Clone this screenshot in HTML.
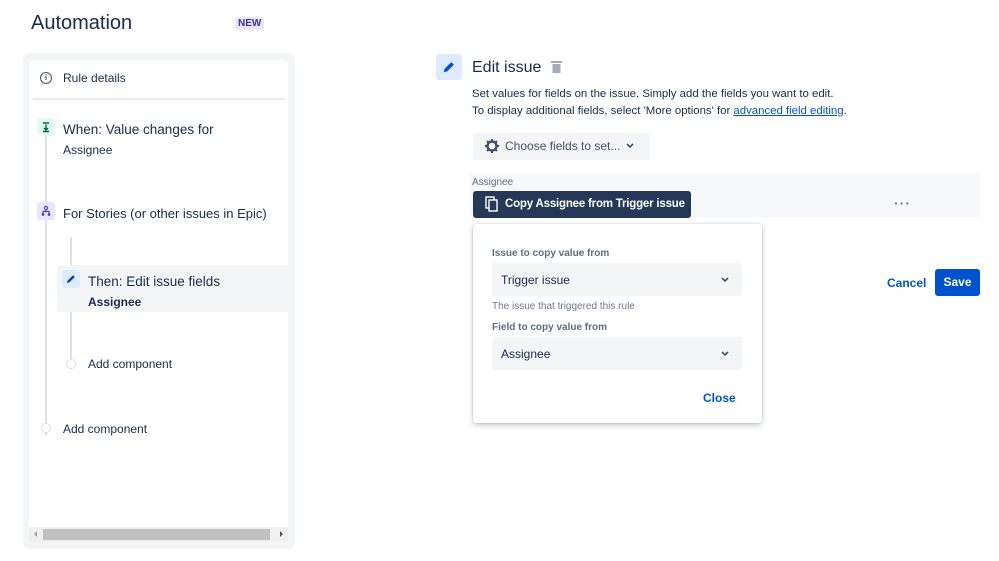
<!DOCTYPE html>
<html><head><style>
*{box-sizing:border-box;margin:0;padding:0}
body{width:999px;height:561px;background:#fff;font-family:"Liberation Sans",sans-serif;color:#172b4d;position:relative;overflow:hidden}
.a{position:absolute}
.t{font-size:13px;white-space:nowrap}
</style></head><body>
<div class="a" style="left:31px;top:12px;font-size:20px;color:#172b4d">Automation</div>
<div class="a" style="left:235px;top:17px;background:#eae6ff;color:#403294;font-size:10px;font-weight:bold;padding:1px 3px;border-radius:3px">NEW</div>

<div class="a" style="left:23px;top:53px;width:272px;height:496px;background:#f4f5f7;border-radius:6px"></div>
<div class="a" style="left:29px;top:60px;width:259px;height:467px;background:#fff;border-radius:6px 6px 0 0"></div>
<div class="a" style="left:29px;top:527px;width:259px;height:15px;background:#f0f0f0"></div>
<div class="a" style="left:43px;top:529px;width:227px;height:11px;background:#c1c1c1"></div>
<div class="a" style="left:34px;top:531px;width:0;height:0;border:3px solid transparent;border-right:3px solid #a3a3a3;border-left:0"></div>
<div class="a" style="left:280px;top:531px;width:0;height:0;border:3px solid transparent;border-left:3px solid #505050;border-right:0"></div>

<div class="a" style="left:40px;top:72px;width:12px;height:12px;border:1.3px solid #42526e;border-radius:50%;font-size:8px;text-align:center;line-height:9px;color:#42526e;font-weight:bold">i</div>
<div class="a t" style="left:63px;top:71px;font-size:12px">Rule details</div>
<div class="a" style="left:33px;top:98px;width:252px;height:2px;background:#ebecf0"></div>

<div class="a" style="left:45px;top:135px;width:2px;height:300px;background:#dfe1e6"></div>
<div class="a" style="left:70px;top:237px;width:2px;height:122px;background:#dfe1e6"></div>

<div class="a" style="left:37px;top:118px;width:18px;height:18px;background:#e3fcef;border-radius:3px"></div>
<svg class="a" style="left:40px;top:121px" width="12" height="12" viewBox="0 0 12 12"><path d="M3 2H9M6 3.5V9M4 7L6 9L8 7M3 10.5H9" stroke="#006644" stroke-width="1.4" fill="none"/></svg>
<div class="a t" style="left:63px;top:122px;font-size:13.5px">When: Value changes for</div>
<div class="a t" style="left:63px;top:143px;font-size:12px">Assignee</div>

<div class="a" style="left:37px;top:202px;width:18px;height:18px;background:#eae6ff;border-radius:3px"></div>
<svg class="a" style="left:40px;top:205px" width="12" height="12" viewBox="0 0 12 12"><circle cx="6" cy="3" r="1.6" fill="none" stroke="#5243aa" stroke-width="1.2"/><path d="M6 4.6V6.5M3 9V6.5H9V9" stroke="#5243aa" stroke-width="1.2" fill="none"/><circle cx="3" cy="9.5" r="1.4" fill="#5243aa"/><circle cx="9" cy="9.5" r="1.4" fill="#5243aa"/></svg>
<div class="a t" style="left:63px;top:206px;font-size:13px">For Stories (or other issues in Epic)</div>

<div class="a" style="left:57px;top:265px;width:231px;height:47px;background:#f4f5f7;border-radius:3px 0 0 3px"></div>
<div class="a" style="left:62px;top:270px;width:18px;height:18px;background:#deebff;border-radius:3px"></div>
<svg class="a" style="left:65px;top:273px" width="12" height="12" viewBox="0 0 12 12"><path d="M2 10 L2.6 7.6 L8 2.2 L9.8 4 L4.4 9.4 Z" fill="#0747a6"/></svg>
<div class="a t" style="left:88px;top:274px;font-size:13.5px">Then: Edit issue fields</div>
<div class="a t" style="left:88px;top:295px;font-size:12px;font-weight:bold">Assignee</div>

<div class="a" style="left:66px;top:359px;width:10px;height:10px;border:1.5px solid #dfe1e6;border-radius:50%;background:#fff"></div>
<div class="a t" style="left:88px;top:357px;font-size:12px">Add component</div>
<div class="a" style="left:41px;top:423px;width:10px;height:10px;border:1.5px solid #dfe1e6;border-radius:50%;background:#fff"></div>
<div class="a t" style="left:63px;top:422px;font-size:12px">Add component</div>

<!-- right -->
<div class="a" style="left:436px;top:54px;width:26px;height:26px;background:#deebff;border-radius:3px"></div>
<svg class="a" style="left:442px;top:60px" width="14" height="14" viewBox="0 0 12 12"><path d="M1.5 10.5 L2.2 7.6 L8 1.8 L10.2 4 L4.4 9.8 Z" fill="#0052cc"/></svg>
<div class="a t" style="left:472px;top:59px;font-size:16px">Edit issue</div>
<svg class="a" style="left:550px;top:60px" width="13" height="14" viewBox="0 0 13 14"><rect x="1" y="1" width="11" height="2" fill="#a5adba"/><rect x="2.5" y="4" width="8" height="9" fill="#a5adba"/></svg>
<div class="a t" style="left:472px;top:88px;font-size:11.4px;color:#172b4d">Set values for fields on the issue. Simply add the fields you want to edit.</div>
<div class="a t" style="left:472px;top:105px;font-size:11.4px">To display additional fields, select 'More options' for <span style="color:#0052cc;text-decoration:underline">advanced field editing</span>.</div>

<div class="a" style="left:473px;top:133px;width:177px;height:27px;background:#f4f5f7;border-radius:3px"></div>
<svg class="a" style="left:484px;top:138px" width="16" height="16" viewBox="0 0 16 16"><circle cx="8" cy="8" r="4.5" fill="none" stroke="#42526e" stroke-width="2.4"/><path d="M8 1V4M8 12V15M1 8H4M12 8H15M3 3L5 5M11 11L13 13M13 3L11 5M5 11L3 13" stroke="#42526e" stroke-width="2"/></svg>
<div class="a t" style="left:505px;top:139px;font-size:12px;color:#42526e">Choose fields to set...</div>
<svg class="a" style="left:626px;top:143px" width="8" height="6" viewBox="0 0 8 6"><path d="M1 1L4 4L7 1" stroke="#42526e" stroke-width="1.6" fill="none"/></svg>

<div class="a" style="left:470px;top:173px;width:510px;height:44px;background:#f7f8f9"></div>
<div class="a t" style="left:472px;top:177px;font-size:10px;color:#5e6c84">Assignee</div>
<div class="a" style="left:473px;top:191px;width:218px;height:27px;background:#253858;border-radius:3px"></div>
<svg class="a" style="left:485px;top:196px" width="14" height="16" viewBox="0 0 14 16"><rect x="1" y="1" width="8" height="11" fill="none" stroke="#fff" stroke-width="1.4"/><rect x="4" y="4" width="8" height="11" fill="#253858" stroke="#fff" stroke-width="1.4"/></svg>
<div class="a t" style="left:505px;top:198px;font-size:11.5px;color:#fff;font-weight:bold;letter-spacing:-0.2px">Copy Assignee from Trigger issue</div>
<div class="a t" style="left:894px;top:195px;font-size:14px;color:#6b778c;letter-spacing:1px;font-weight:bold">···</div>

<div class="a" style="left:473px;top:224px;width:289px;height:199px;background:#fff;border-radius:3px;box-shadow:0 2px 6px rgba(9,30,66,.25),0 0 1px rgba(9,30,66,.3)"></div>
<div class="a t" style="left:492px;top:248px;font-size:10px;color:#5e6c84;font-weight:bold">Issue to copy value from</div>
<div class="a" style="left:492px;top:263px;width:250px;height:33px;background:#f4f5f7;border-radius:3px"></div>
<div class="a t" style="left:501px;top:273px;font-size:12px">Trigger issue</div>
<svg class="a" style="left:721px;top:277px" width="8" height="6" viewBox="0 0 8 6"><path d="M1 1L4 4L7 1" stroke="#42526e" stroke-width="1.6" fill="none"/></svg>
<div class="a t" style="left:492px;top:301px;font-size:10px;color:#6b778c">The issue that triggered this rule</div>
<div class="a t" style="left:492px;top:322px;font-size:10px;color:#5e6c84;font-weight:bold">Field to copy value from</div>
<div class="a" style="left:492px;top:337px;width:250px;height:33px;background:#f4f5f7;border-radius:3px"></div>
<div class="a t" style="left:501px;top:347px;font-size:12px">Assignee</div>
<svg class="a" style="left:721px;top:351px" width="8" height="6" viewBox="0 0 8 6"><path d="M1 1L4 4L7 1" stroke="#42526e" stroke-width="1.6" fill="none"/></svg>
<div class="a t" style="left:703px;top:391px;font-size:12px;color:#0052cc;font-weight:bold">Close</div>

<div class="a t" style="left:887px;top:276px;font-size:12px;color:#0052cc;font-weight:bold">Cancel</div>
<div class="a" style="left:935px;top:269px;width:45px;height:27px;background:#0052cc;border-radius:3px;color:#fff;font-size:12px;font-weight:bold;text-align:center;line-height:27px">Save</div>
</body></html>
